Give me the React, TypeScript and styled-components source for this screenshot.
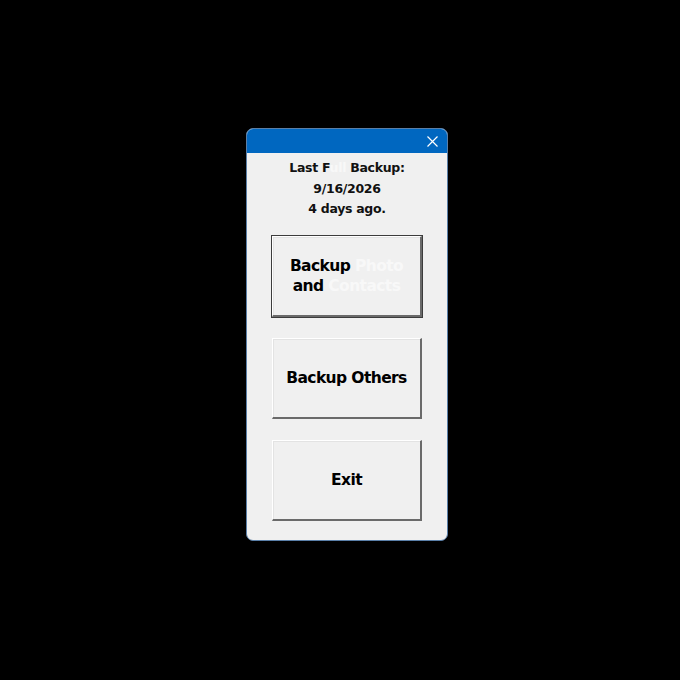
import React from 'react';
import styled, { createGlobalStyle } from 'styled-components';

const GlobalStyle = createGlobalStyle`
  html, body {
    margin: 0;
    padding: 0;
    background: #000;
  }
`

const Page = styled.div`
  width: 680px;
  height: 680px;
  box-sizing: border-box;
  padding: 128px 0 0 246px;
  font-family: "DejaVu Sans", "Liberation Sans", sans-serif;
`

const Window = styled.div`
  width: 202px;
  height: 413px;
  box-sizing: border-box;
  background: #f0f0f0;
  border: 1px solid #5a7fa8;
  border-radius: 7px;
  overflow: hidden;
  display: flex;
  flex-direction: column;
`

const TitleBar = styled.div`
  height: 24px;
  background: #0067c0;
  display: flex;
  align-items: center;
  justify-content: flex-end;
  padding-right: 9px;
`

const CloseIcon = styled.svg`
  width: 11px;
  height: 11px;
`

const Info = styled.div`
  padding-top: 5px;
  display: flex;
  flex-direction: column;
  align-items: center;
  font-size: 12.5px;
  font-weight: bold;
  letter-spacing: -0.3px;
  line-height: 20.5px;
  color: #111;
`

const Hidden = styled.span`
  color: #f8f8f8;
`

const Buttons = styled.div`
  margin-top: 16px;
  display: flex;
  flex-direction: column;
  align-items: center;
  gap: 21px;
`

interface ButtonProps {
  $default?: boolean;
}

const Button = styled.button<ButtonProps>`
  width: 150px;
  height: 81px;
  box-sizing: border-box;
  background: #f0f0f0;
  font-family: "DejaVu Sans", "Liberation Sans", sans-serif;
  font-size: 15.5px;
  font-weight: bold;
  letter-spacing: -0.6px;
  line-height: 20px;
  color: #000;
  padding: 0 8px;
  border-style: solid;
  border-width: 1px 2px 2px 1px;
  border-color: #ffffff #6a6a6a #6a6a6a #ffffff;
  box-shadow: ${(props) => props.$default ? '0 0 0 1px #3c3c3c, inset 1px 1px 0 #e3e3e3' : 'inset 1px 1px 0 #e3e3e3'};
  cursor: pointer;
`

const App = () => {
  return (
    <Page>
      <GlobalStyle />
      <Window>
        <TitleBar>
          <CloseIcon viewBox="0 0 11 11">
            <path d="M0.5 0.5 L10.5 10.5 M10.5 0.5 L0.5 10.5" stroke="#fff" strokeWidth="1.2" />
          </CloseIcon>
        </TitleBar>
        <Info>
          <div>Last F<Hidden>ull</Hidden> Backup:</div>
          <div>9/16/2026</div>
          <div>4 days ago.</div>
        </Info>
        <Buttons>
          <Button $default>Backup <Hidden>Photo</Hidden> and <Hidden>Contacts</Hidden></Button>
          <Button>Backup Others</Button>
          <Button>Exit</Button>
        </Buttons>
      </Window>
    </Page>
  )
}

export default App;
